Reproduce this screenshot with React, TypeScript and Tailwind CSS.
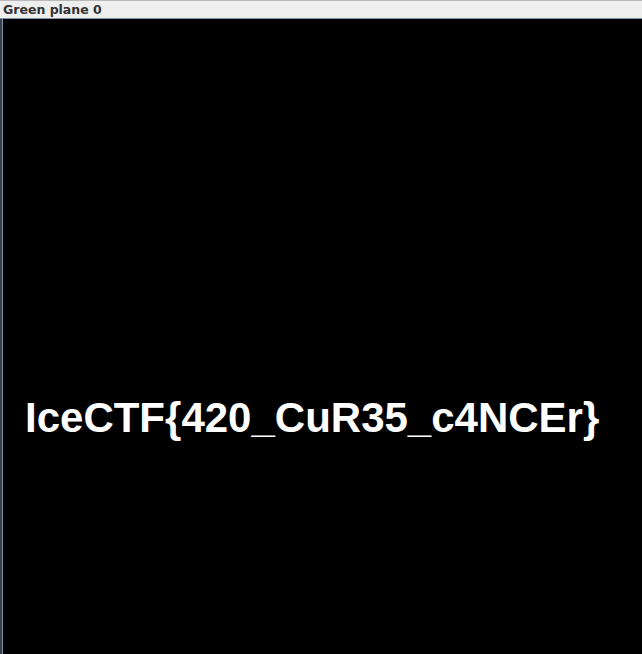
export default function App() {
  return (
    <div className="flex h-[654px] w-[642px] flex-col overflow-hidden bg-black">
      <div className="h-[19px] shrink-0 border-t border-b border-t-[#b8b8b8] border-b-[#7f93a8] bg-[#eeeeee] pl-[3px] font-['DejaVu_Sans',sans-serif] text-[12.5px] font-bold leading-[17px] text-[#333333]">
        Green plane 0
      </div>
      <div className="flex flex-1">
        <div className="w-[2px] shrink-0 bg-[#3a3f47]" />
        <div className="w-px shrink-0 bg-[#7f93a8]" />
        <div className="flex-1 pl-[22px] pt-[378px]">
          <div className="font-['Liberation_Sans',Arial,sans-serif] text-[42px] font-bold leading-none text-white">
            IceCTF{"{"}420_CuR35_c4NCEr{"}"}
          </div>
        </div>
      </div>
    </div>
  );
}
